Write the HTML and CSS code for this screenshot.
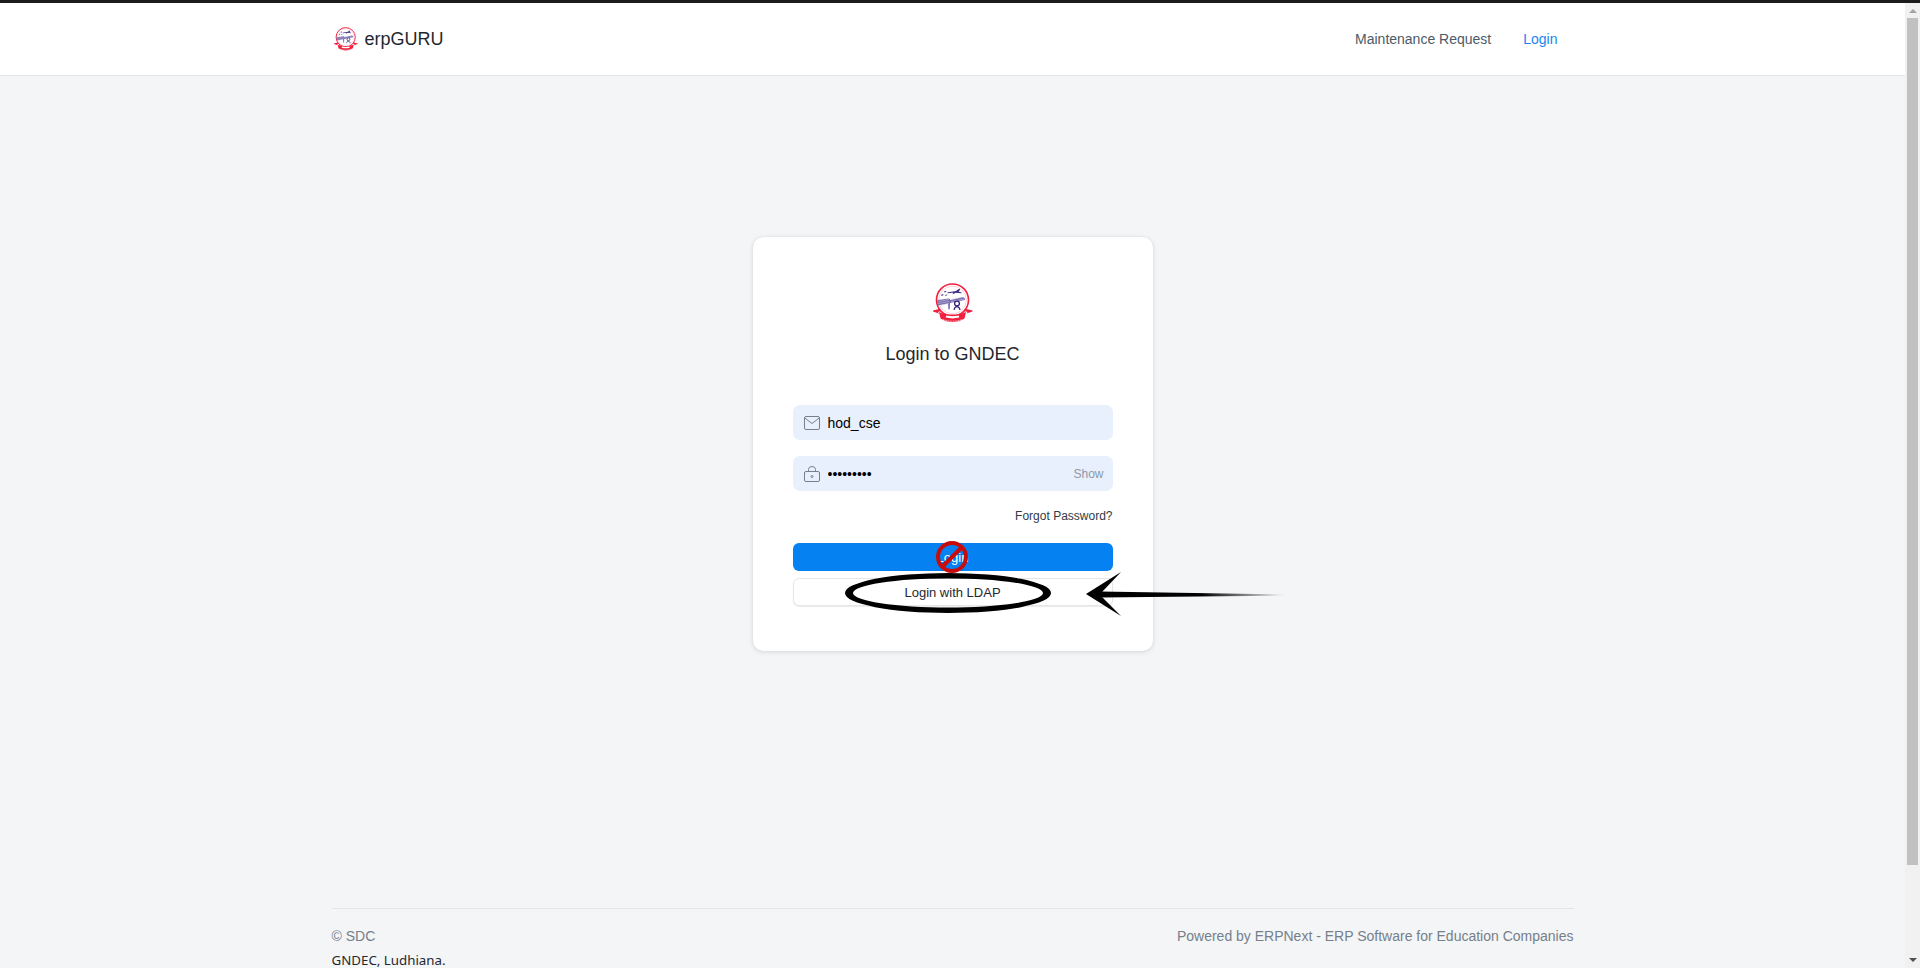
FILE: index.html
```html
<!DOCTYPE html>
<html lang="en">
<head>
<meta charset="utf-8">
<title>Login to GNDEC</title>
<link rel="stylesheet" href="styles.css">
</head>
<body>
<svg class="defs" width="0" height="0" aria-hidden="true">
  <defs>
    <symbol id="logo" viewBox="0 0 40 40">
      <circle cx="19.5" cy="17" r="16" fill="#fff" stroke="#f0203f" stroke-width="1.6"/>
      <circle cx="19.5" cy="17" r="13.8" fill="none" stroke="#f7a3b1" stroke-width=".5"/>
      <path d="M14 9.500l9-1.600 3.200-2.200 1 .6-1.500 2.500 3 .6-.5.9-5.600-.6-2 1.300-1.100-.2 1-1.300-5 .8z" fill="#3e2a86"/>
      <path d="M11 8.500l2-.8.500.9-2 .8zM8 12l2-1 .6 1-1.900 1zM12 12l2-.6.400.8-2 .6z" fill="#4a3790"/>
      <path d="M4.500 17L16 15.500l1 .5v1l13-3 2 1.500-.2 1.500-14.800 3-.2 6-1.400.4-.4-5.900-10 2-1-4z" fill="#7b6fb0"/>
      <path d="M5 18.500l11-2M5 20.500l11-2M6 22.500l10-2M18 16.500l12-2.300M18 18.500l13-2.400" stroke="#cfcbe4" stroke-width=".5"/>
      <circle cx="24" cy="20.500" r="2.400" fill="#fff" stroke="#33207e" stroke-width="1.300"/>
      <path d="M21 27c.4-2.300 1.700-3.300 3-3.300s2.600 1 3 3.300" fill="none" stroke="#33207e" stroke-width="1.200"/>
      <path d="M0 27.500l6-1.500 2 2-3 1 1 1.500-6-2zM39.500 27.500l-6-1.500-2 2 3 1-1 1.500 6-2z" fill="#f0203f"/>
      <path d="M6 29c4 2 9 2.600 13.500 2.600S29 31 33 29l-1.500 6.500c-3.500 2.500-7.500 3.500-12 3.500s-8.500-1-12-3.500z" fill="#f0203f"/>
      <path d="M13 33.500c2 .5 4.500.8 6.500.8s4.500-.3 6.500-.8" fill="none" stroke="#fff" stroke-width="2.200"/>
      <path d="M15 33.800h9M10 36.500c3 1.200 6 1.700 9.500 1.700s6.500-.5 9.500-1.700" fill="none" stroke="#fff" stroke-width=".7" stroke-dasharray="1 .7"/>
    </symbol>
  </defs>
</svg>
<div class="topline"></div>
<div class="window">
  <div class="viewport">
    <header class="navbar">
      <div class="nav-inner">
        <a class="brand" href="#">
          <svg class="brand-logo"><use href="#logo"/></svg>
          <span>erpGURU</span>
        </a>
        <nav class="nav-links">
          <a class="nav-link" href="#">Maintenance Request</a>
          <a class="nav-link nav-link-active" href="#">Login</a>
        </nav>
      </div>
    </header>

    <main class="main">
      <section class="card">
        <svg class="card-logo"><use href="#logo"/></svg>
        <h1 class="card-title">Login to GNDEC</h1>
        <form class="form">
          <div class="field">
            <svg class="field-icon" viewBox="0 0 16 16" fill="none" stroke="#74808b" stroke-width="1">
              <rect x=".5" y="1.500" width="15" height="13" rx="1.500"/>
              <path d="M.8 3L8 8.500 15.200 3"/>
            </svg>
            <input class="input" type="text" value="hod_cse" readonly>
          </div>
          <div class="field">
            <svg class="field-icon" viewBox="0 0 16 16" fill="none" stroke="#74808b" stroke-width="1">
              <rect x=".5" y="5.500" width="15" height="10" rx="1.500"/>
              <path d="M4.500 5.500V3.500a3.500 3 0 0 1 7 0v2"/>
              <circle cx="8" cy="10.500" r="1"/>
            </svg>
            <input class="input" type="password" value="123456789" readonly>
            <span class="show">Show</span>
          </div>
          <div class="forgot-row"><a class="forgot" href="#">Forgot Password?</a></div>
          <button class="btn btn-primary" type="button">Login</button>
          <button class="btn btn-default" type="button">Login with LDAP</button>
        </form>

        <svg class="annotations" viewBox="753 237 560 414" aria-hidden="true">
          <defs>
            <linearGradient id="shaft" x1="1100" y1="0" x2="1285" y2="0" gradientUnits="userSpaceOnUse">
              <stop offset="0" stop-color="#000"/>
              <stop offset=".55" stop-color="#000"/>
              <stop offset="1" stop-color="#000" stop-opacity="0"/>
            </linearGradient>
          </defs>
          <circle cx="952" cy="557" r="14" fill="none" stroke="#c80b0b" stroke-width="4"/>
          <path d="M962 547L942 567" stroke="#c80b0b" stroke-width="4"/>
          <path fill-rule="evenodd" d="M845 593a103 20 0 1 0 206 0a103 20 0 1 0-206 0zM853 593a95 14.500 0 1 1 190 0a95 14.500 0 1 1-190 0z" fill="#000"/>
          <path d="M1086 594l35-22-19 20 0 5 19 19z" fill="#000"/>
          <path d="M1100 591.500L1285 594.500V595.500L1100 597.500z" fill="url(#shaft)"/>
        </svg>
      </section>
    </main>

    <footer class="footer">
      <div class="footer-row">
        <div class="footer-left">
          <div class="copyright">© SDC</div>
          <div class="address">GNDEC, Ludhiana.</div>
        </div>
        <div class="powered">Powered by ERPNext - ERP Software for Education Companies</div>
      </div>
    </footer>
  </div>

  <div class="scrollbar" aria-hidden="true">
    <span class="scroll-up"></span>
    <span class="scroll-thumb"></span>
    <span class="scroll-down"></span>
  </div>
</div>
</body>
</html>
```

FILE: styles.css
```css
* { box-sizing: border-box; }
html, body { margin: 0; height: 968px; overflow: hidden; }
body {
  background: #f4f5f6;
  color: #1f272e;
  font-family: "Liberation Sans", Arial, sans-serif;
  font-size: 14px;
  display: flex;
  flex-direction: column;
}
a { text-decoration: none; color: inherit; }
.defs { position: absolute; }

.topline { height: 3px; background: #1c1c1c; flex: none; }
.window { display: flex; flex: 1; min-height: 0; }
.viewport { flex: 1; min-width: 0; overflow: hidden; display: flex; flex-direction: column; }

.navbar { flex: none; height: 73px; background: #fff; border-bottom: 1px solid #e2e6e9; }
.nav-inner {
  width: 1242px;
  height: 100%;
  margin: 0 auto;
  padding: 0 16px 0 2px;
  display: flex;
  align-items: center;
  justify-content: space-between;
}
.brand { display: flex; align-items: center; gap: 7px; font-size: 18px; color: #1f272e; }
.brand-logo { width: 24px; height: 24px; }
.nav-links { display: flex; gap: 32px; }
.nav-link { color: #4c5a67; line-height: 21px; }
.nav-link-active { color: #1a85ef; }

.main { flex: none; height: 832px; padding-top: 161px; }
.card {
  position: relative;
  width: 400px;
  margin: 0 auto;
  padding: 46px 40px 45px;
  background: #fff;
  border-radius: 10px;
  box-shadow: 0 0 1px rgba(0, 0, 0, .12), 0 1px 5px rgba(0, 0, 0, .12);
  display: flex;
  flex-direction: column;
  align-items: center;
}
.card-logo { width: 40px; height: 40px; flex: none; }
.card-title { margin: 18px 0 0; font-size: 18px; font-weight: 400; line-height: 27px; color: #1f272e; }
.form { width: 320px; margin-top: 37px; display: flex; flex-direction: column; }

.field { position: relative; height: 35px; margin-bottom: 16px; }
.input {
  display: block;
  width: 100%;
  height: 100%;
  padding: 0 50px 0 35px;
  border: 0;
  outline: 0;
  border-radius: 7px;
  background: #e8f0fe;
  color: #000;
  font: 14px "Liberation Sans", Arial, sans-serif;
}
.field-icon { position: absolute; left: 11px; top: 10px; width: 16px; height: 16px; }
.show { position: absolute; right: 9px; top: 11px; font-size: 12px; line-height: 14px; color: #8d99a6; }

.forgot-row { height: 18px; text-align: right; font-size: 12px; line-height: 18px; }
.forgot { color: #313b44; }

.btn {
  display: block;
  width: 100%;
  height: 28px;
  border-radius: 6px;
  font: 13px "Liberation Sans", Arial, sans-serif;
  padding: 0;
}
.btn-primary { margin-top: 18px; border: 0; background: #0581f1; color: #fff; }
.btn-default { margin-top: 7px; border: 1px solid #e4e7ea; background: #fff; color: #1f272e; box-shadow: 0 1px 1px rgba(0, 0, 0, .08); }

.annotations { position: absolute; left: 0; top: 0; width: 560px; height: 414px; overflow: visible; pointer-events: none; }

.footer { flex: none; width: 1242px; margin: 0 auto; border-top: 1px solid #e2e6e9; padding-top: 19px; }
.footer-row { display: flex; justify-content: space-between; align-items: flex-start; }
.copyright { color: #74808b; line-height: 16px; }
.address { margin-top: 9px; font-family: "Noto Sans", sans-serif; font-size: 13.3px; color: #1f272e; line-height: 15px; }
.powered { color: #74808b; line-height: 16px; }

.scrollbar { flex: none; width: 15px; background: #f1f1f1; display: flex; flex-direction: column; align-items: center; }
.scroll-up { flex: none; margin-top: 6px; width: 0; height: 0; border: 4px solid transparent; border-top: 0; border-bottom: 4px solid #a3a3a3; }
.scroll-thumb { flex: none; width: 11px; height: 847px; margin-top: 5px; background: #c1c1c1; }
.scroll-down { flex: none; margin-top: 93px; width: 0; height: 0; border: 4px solid transparent; border-bottom: 0; border-top: 4px solid #505050; }
```
